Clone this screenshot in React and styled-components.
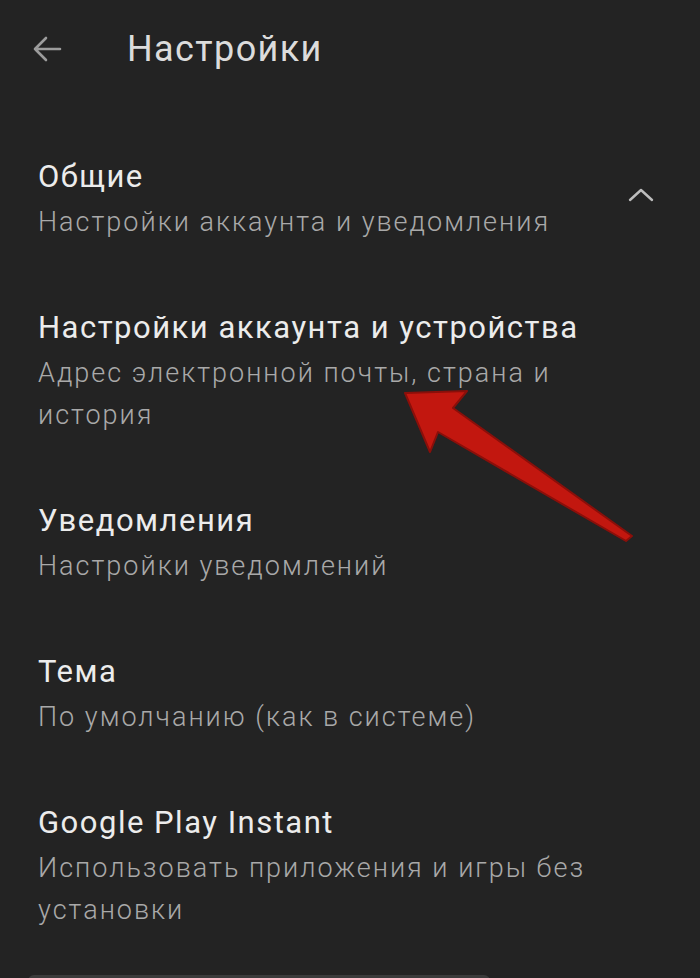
import styled, { createGlobalStyle } from 'styled-components';

const GlobalStyle = createGlobalStyle`
  body {
    margin: 0;
    background: #232323;
    font-family: Roboto, "Noto Sans", sans-serif;
  }
`;

const items = [
  { title: 'Общие', subtitle: 'Настройки аккаунта и уведомления', chevron: true },
  { title: 'Настройки аккаунта и устройства', subtitle: 'Адрес электронной почты, страна и история' },
  { title: 'Уведомления', subtitle: 'Настройки уведомлений' },
  { title: 'Тема', subtitle: 'По умолчанию (как в системе)' },
  { title: 'Google Play Instant', subtitle: 'Использовать приложения и игры без установки' },
];

function App() {
  return (
    <>
      <GlobalStyle />
      <Screen>
        <Header>
          <BackButton>
            <svg width="30" height="30" viewBox="0 0 30 30" fill="none" stroke="#9c9c9c" strokeWidth="2.6" strokeLinecap="round" strokeLinejoin="round">
              <path d="M28 15H3M14 4L3 15l11 11" />
            </svg>
          </BackButton>
          <Title>Настройки</Title>
        </Header>
        <List>
          {items.map((item) => (
            <Item key={item.title}>
              <ItemText>
                <ItemTitle>{item.title}</ItemTitle>
                <ItemSubtitle>{item.subtitle}</ItemSubtitle>
              </ItemText>
              {item.chevron && (
                <Chevron>
                  <svg width="26" height="16" viewBox="0 0 26 16" fill="none" stroke="#bdbdbd" strokeWidth="2.4" strokeLinecap="round" strokeLinejoin="round">
                    <path d="M2 13L13 3l11 10" />
                  </svg>
                </Chevron>
              )}
            </Item>
          ))}
        </List>
        <BottomBar />
        <Pointer viewBox="0 0 700 978" width="700" height="978">
          <polygon
            points="405,393 467,391 453,408 632,536 626,541 438,432 430,452"
            fill="#c2170f"
            stroke="#8a0f0a"
            strokeWidth="2"
            strokeLinejoin="round"
          />
        </Pointer>
      </Screen>
    </>
  );
}

export default App;

const Screen = styled.div`
  position: relative;
  width: 700px;
  height: 978px;
  overflow: hidden;
  background: #232323;
`;

const Header = styled.div`
  display: flex;
  align-items: center;
  height: 100px;
  padding: 0 0 2px 32px;
  box-sizing: border-box;
`;

const BackButton = styled.div`
  display: flex;
  width: 30px;
  height: 30px;
  margin-right: 65px;
`;

const Title = styled.h1`
  margin: 0;
  font-size: 36px;
  font-weight: 400;
  color: #dcdcdc;
  letter-spacing: 1.4px;
`;

const List = styled.div`
  display: flex;
  flex-direction: column;
  padding-top: 24px;
`;

const Item = styled.div`
  display: flex;
  align-items: flex-start;
  padding: 33px 46px 32px 38px;
`;

const ItemText = styled.div`
  flex: 1;
`;

const ItemTitle = styled.div`
  font-size: 31px;
  line-height: 40px;
  color: #ececec;
  letter-spacing: 1.5px;
`;

const ItemSubtitle = styled.div`
  margin-top: 4px;
  font-size: 27px;
  line-height: 42px;
  font-weight: 300;
  color: #a9a9a9;
  letter-spacing: 2px;
`;

const Chevron = styled.div`
  display: flex;
  margin-top: 30px;
`;

const BottomBar = styled.div`
  position: absolute;
  left: 28px;
  top: 975px;
  width: 462px;
  height: 20px;
  border-radius: 6px;
  background: #3b3b3b;
`;

const Pointer = styled.svg`
  position: absolute;
  left: 0;
  top: 0;
  pointer-events: none;
`;
